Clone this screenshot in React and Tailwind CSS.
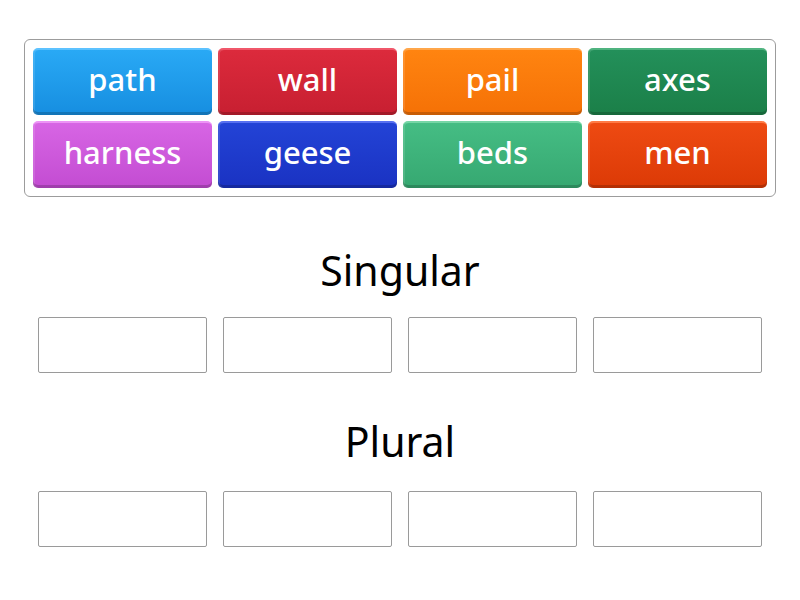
import React from 'react';

const tiles = [
  { word: 'path', cls: 'bg-gradient-to-b from-[#29a9f5] to-[#168ee0] border-t-[#5cc2ff]' },
  { word: 'wall', cls: 'bg-gradient-to-b from-[#dc2a3c] to-[#c71f31] border-t-[#f0576a]' },
  { word: 'pail', cls: 'bg-gradient-to-b from-[#ff8410] to-[#f57106] border-t-[#ffa64a]' },
  { word: 'axes', cls: 'bg-gradient-to-b from-[#23905a] to-[#1b7f48] border-t-[#4fb37f]' },
  { word: 'harness', cls: 'bg-gradient-to-b from-[#d765e4] to-[#c34cd2] border-t-[#ec93f5]' },
  { word: 'geese', cls: 'bg-gradient-to-b from-[#2343d6] to-[#1a32c2] border-t-[#5770f0]' },
  { word: 'beds', cls: 'bg-gradient-to-b from-[#45bd84] to-[#36a871] border-t-[#76d6a6]' },
  { word: 'men', cls: 'bg-gradient-to-b from-[#ee4a12] to-[#dc3a06] border-t-[#ff7a45]' },
];

const Tile = ({ word, cls }) => (
  <div
    className={`h-[67px] rounded-[5px] border-t-2 flex items-center justify-center text-white text-[31px] font-medium shadow-[inset_0_-3px_0_rgba(0,0,0,0.18),inset_2px_0_0_rgba(255,255,255,0.12)] ${cls}`}
  >
    <span className="-mt-[7px]">{word}</span>
  </div>
);

const DropRow = () => (
  <div className="mx-[38px] grid grid-cols-4 gap-[16px]">
    {[0, 1, 2, 3].map((i) => (
      <div key={i} className="h-[56px] border border-[#9a9a9a] rounded-[2px] bg-white" />
    ))}
  </div>
);

const App = () => {
  return (
    <div className="w-[800px] h-[600px] bg-white overflow-hidden" style={{ fontFamily: '"Noto Sans", "Open Sans", sans-serif' }}>
      {/* word bank */}
      <div className="mx-[24px] mt-[39px] border border-[#9c9c9c] rounded-[6px] p-[8px] grid grid-cols-4 gap-[6px]">
        {tiles.map((t) => (
          <Tile key={t.word} {...t} />
        ))}
      </div>

      {/* Singular */}
      <div className="mt-[50px] h-[48px] flex items-center justify-center text-[41px] text-black">
        Singular
      </div>
      <div className="mt-[22px]">
        <DropRow />
      </div>

      {/* Plural */}
      <div className="mt-[45px] h-[48px] flex items-center justify-center text-[41px] text-black">
        Plural
      </div>
      <div className="mt-[25px]">
        <DropRow />
      </div>
    </div>
  );
};

export default App;
